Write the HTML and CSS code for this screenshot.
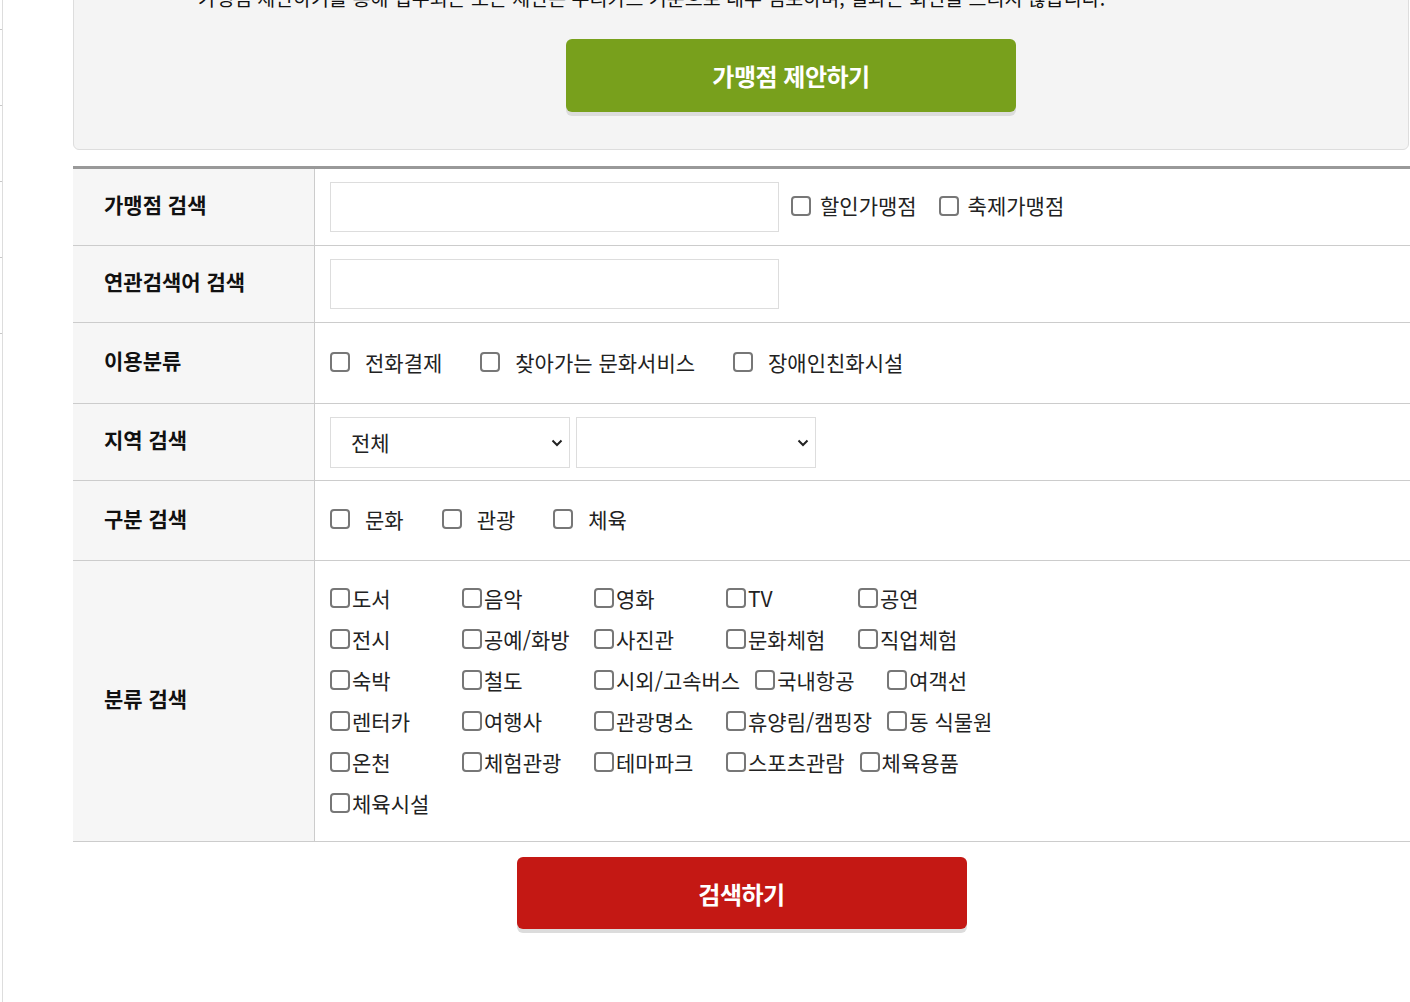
FILE: index.html
```html
<!DOCTYPE html>
<html lang="ko">

<head>
  <meta charset="UTF-8">
  <meta name="viewport" content="width=device-width, initial-scale=1.0">
  <title>가맹점 검색</title>
  <link rel="stylesheet" href="styles.css">
</head>

<body>
  <div class="page">
    <div class="side">
      <span class="tick t1"></span>
      <span class="tick"></span>
      <span class="tick"></span>
      <span class="tick"></span>
      <span class="tick"></span>
    </div>

    <div class="content">
      <div class="notice">
        <ul class="noticeList">
          <li>가맹점 제안하기를 통해 접수되는 모든 제안은 누리카드 기준으로 내부 검토하며, 결과는 회신을 드리지 않습니다.</li>
        </ul>
        <div class="noticeBtnWrap">
          <a class="btn btnGreen" href="#">가맹점 제안하기</a>
        </div>
      </div>

      <div class="searchTable">
        <div class="row rowInput">
          <div class="th">가맹점 검색</div>
          <div class="td">
            <input class="input" type="text">
            <label class="chk chkSmall"><input type="checkbox">할인가맹점</label>
            <label class="chk chkSmall"><input type="checkbox">축제가맹점</label>
          </div>
        </div>
        <div class="row rowInput">
          <div class="th">연관검색어 검색</div>
          <div class="td">
            <input class="input" type="text">
          </div>
        </div>
        <div class="row rowUse">
          <div class="th">이용분류</div>
          <div class="td">
            <label class="chk chkWide"><input type="checkbox">전화결제</label>
            <label class="chk chkWide"><input type="checkbox">찾아가는 문화서비스</label>
            <label class="chk chkWide"><input type="checkbox">장애인친화시설</label>
          </div>
        </div>
        <div class="row rowInput">
          <div class="th">지역 검색</div>
          <div class="td">
            <span class="selectBox">
              <select class="select">
                <option>전체</option>
              </select>
              <svg class="chevron" width="12" height="8" viewBox="0 0 12 8"><polyline points="1.5,1.5 6,6 10.5,1.5" fill="none" stroke="#222" stroke-width="2"/></svg>
            </span>
            <span class="selectBox">
              <select class="select">
                <option></option>
              </select>
              <svg class="chevron" width="12" height="8" viewBox="0 0 12 8"><polyline points="1.5,1.5 6,6 10.5,1.5" fill="none" stroke="#222" stroke-width="2"/></svg>
            </span>
          </div>
        </div>
        <div class="row rowType">
          <div class="th">구분 검색</div>
          <div class="td">
            <label class="chk chkWide"><input type="checkbox">문화</label>
            <label class="chk chkWide"><input type="checkbox">관광</label>
            <label class="chk chkWide"><input type="checkbox">체육</label>
          </div>
        </div>
        <div class="row rowCat">
          <div class="th">분류 검색</div>
          <div class="td">
            <div class="catList">
              <label class="cat"><input type="checkbox">도서</label>
              <label class="cat"><input type="checkbox">음악</label>
              <label class="cat"><input type="checkbox">영화</label>
              <label class="cat"><input type="checkbox">TV</label>
              <label class="cat"><input type="checkbox">공연</label>
              <label class="cat"><input type="checkbox">전시</label>
              <label class="cat"><input type="checkbox">공예/화방</label>
              <label class="cat"><input type="checkbox">사진관</label>
              <label class="cat"><input type="checkbox">문화체험</label>
              <label class="cat"><input type="checkbox">직업체험</label>
              <label class="cat"><input type="checkbox">숙박</label>
              <label class="cat"><input type="checkbox">철도</label>
              <label class="cat"><input type="checkbox">시외/고속버스</label>
              <label class="cat"><input type="checkbox">국내항공</label>
              <label class="cat"><input type="checkbox">여객선</label>
              <label class="cat"><input type="checkbox">렌터카</label>
              <label class="cat"><input type="checkbox">여행사</label>
              <label class="cat"><input type="checkbox">관광명소</label>
              <label class="cat"><input type="checkbox">휴양림/캠핑장</label>
              <label class="cat"><input type="checkbox">동 식물원</label>
              <label class="cat"><input type="checkbox">온천</label>
              <label class="cat"><input type="checkbox">체험관광</label>
              <label class="cat"><input type="checkbox">테마파크</label>
              <label class="cat"><input type="checkbox">스포츠관람</label>
              <label class="cat"><input type="checkbox">체육용품</label>
              <label class="cat"><input type="checkbox">체육시설</label>
            </div>
          </div>
        </div>
      </div>

      <div class="searchBtnWrap">
        <button class="btn btnRed" type="button">검색하기</button>
      </div>
    </div>
  </div>
</body>

</html>
```

FILE: styles.css
```css
html,
body {
  margin: 0;
  padding: 0;
}

body {
  font-family: "Noto Sans CJK KR", "Noto Sans", sans-serif;
  font-size: 21px;
  color: #222;
  background-color: #fff;
  overflow: hidden;
}

.page {
  display: flex;
  min-height: 100vh;
}

/* left edge of the side menu */
.side {
  width: 2px;
  border-right: 1px solid #ddd;
  display: flex;
  flex-direction: column;
}

.side .tick {
  display: block;
  height: 75px;
  border-bottom: 1px solid #c8c8c8;
}

.side .tick.t1 {
  height: 29px;
}

.content {
  flex: 1;
  margin-left: 70px;
  min-width: 0;
}

/* notice box */
.notice {
  margin-top: -40px;
  padding: 22px 0 37px 100px;
  background-color: #f4f4f4;
  border: 1px solid #ddd;
  border-radius: 6px;
  margin-right: 1px;
}

.noticeList {
  list-style: none;
  margin: 0;
  padding: 0;
}

.noticeList li {
  position: relative;
  padding-left: 24px;
  line-height: 30px;
  font-size: 19.5px;
  white-space: nowrap;
  color: #111;
}

.noticeList li::before {
  content: "";
  position: absolute;
  left: 0;
  top: 12px;
  width: 6px;
  height: 5px;
  background-color: #aaa;
}

.noticeBtnWrap {
  margin-top: 26px;
  display: flex;
  justify-content: center;
}

.btn {
  display: flex;
  align-items: center;
  justify-content: center;
  width: 450px;
  height: 73px;
  border: 0;
  border-radius: 6px;
  color: #fff;
  font-family: inherit;
  font-size: 24px;
  font-weight: 700;
  letter-spacing: -0.5px;
  text-decoration: none;
  box-shadow: 0 4px 0 #dcdcdc;
  cursor: pointer;
}

.btnGreen {
  background-color: #78a01c;
}

.btnRed {
  height: 72px;
  background-color: #c41814;
}

/* search table */
.searchTable {
  margin-top: 16px;
  border-top: 3px solid #999;
}

.row {
  display: grid;
  grid-template-columns: 242px 1fr;
  border-bottom: 1px solid #ccc;
}

.row .th {
  display: flex;
  align-items: center;
  box-sizing: border-box;
  padding-left: 31px;
  padding-bottom: 6px;
  background-color: #f6f6f6;
  border-right: 1px solid #ccc;
  font-weight: 700;
  color: #111;
}

.row .td {
  display: flex;
  align-items: center;
  padding: 0 15px;
}

.rowInput {
  height: 77px;
  box-sizing: border-box;
}

.rowUse {
  height: 81px;
  box-sizing: border-box;
}

.rowType {
  height: 80px;
  box-sizing: border-box;
}

.rowUse .td,
.rowType .td {
  padding-bottom: 3px;
}

.rowCat .td {
  padding-top: 16px;
  padding-bottom: 18px;
}

.input {
  width: 449px;
  height: 50px;
  box-sizing: border-box;
  border: 1px solid #ddd;
  background-color: #fff;
  margin: 0;
}

input[type="checkbox"] {
  appearance: none;
  -webkit-appearance: none;
  width: 20px;
  height: 20px;
  margin: 0;
  box-sizing: border-box;
  border: 2px solid #777;
  border-radius: 4px;
  background-color: #fff;
  flex-shrink: 0;
}

.chk {
  display: inline-flex;
  align-items: center;
  white-space: nowrap;
  line-height: 30px;
}

.chkSmall {
  margin-left: 12px;
  margin-bottom: 5px;
}

.chkSmall + .chkSmall {
  margin-left: 22px;
}

.chkSmall input {
  margin-right: 9px;
  margin-top: 3px;
}

.chkWide {
  margin-right: 38px;
}

.chkWide input {
  margin-right: 15px;
}

.selectBox {
  position: relative;
  display: inline-block;
  margin-right: 6px;
}

.select {
  appearance: none;
  -webkit-appearance: none;
  width: 240px;
  height: 51px;
  box-sizing: border-box;
  padding: 0 30px 0 20px;
  border: 1px solid #ddd;
  border-radius: 0;
  background-color: #fff;
  font-family: inherit;
  font-size: 21px;
  color: #222;
  display: block;
}

.chevron {
  position: absolute;
  right: 7px;
  top: 22px;
}

.catList {
  display: flex;
  flex-wrap: wrap;
  width: 720px;
}

.cat {
  display: inline-flex;
  align-items: center;
  height: 41px;
  min-width: 117px;
  margin-right: 15px;
  white-space: nowrap;
}

.cat input {
  margin-right: 2px;
}

.searchBtnWrap {
  margin-top: 15px;
  display: flex;
  justify-content: center;
}
```
